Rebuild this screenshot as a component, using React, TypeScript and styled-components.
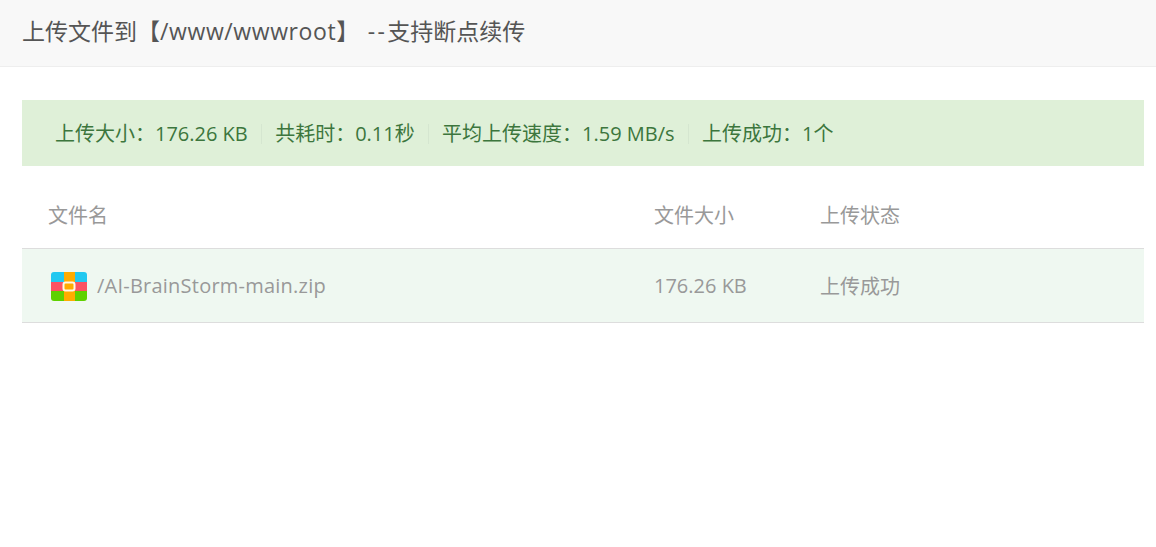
import React from 'react'
import styled, { createGlobalStyle } from 'styled-components'

const GlobalStyle = createGlobalStyle`
	html, body {
		margin: 0;
		padding: 0;
		background: #fff;
		font-family: "Open Sans", "Noto Sans CJK SC", sans-serif;
	}
`

const Page = styled.div`
	width: 1156px;
	height: 547px;
	overflow: hidden;
	background: #fff;
`

const Header = styled.div`
	height: 67px;
	padding: 0 22px 7px;
	box-sizing: border-box;
	display: flex;
	align-items: center;
	white-space: pre;
	font-size: 23px;
	color: #555;
	background: #f8f8f8;
	border-bottom: 1px solid #eee;
`

const Latin = styled.span<{ $spacing: string }>`
	letter-spacing: ${(props) => props.$spacing};
`

const Content = styled.div`
	padding: 33px 12px 0 22px;
`

const Alert = styled.div`
	height: 66px;
	padding: 2px 19.8px 0;
	box-sizing: border-box;
	display: flex;
	align-items: center;
	font-size: 20px;
	color: #3c763d;
	background: #dff0d8;
`

const Stat = styled.span<{ $first?: boolean }>`
	padding: 0 13.2px;
	white-space: nowrap;
	border-left: ${(props) => (props.$first ? 'none' : '1px solid #d5e6d0')};
	line-height: 20px;
`

const Row = styled.div<{ $head?: boolean }>`
	display: grid;
	grid-template-columns: 632px 166px 1fr;
	align-items: center;
	height: ${(props) => (props.$head ? '68px' : '73px')};
	padding-top: ${(props) => (props.$head ? '14px' : '0')};
	font-size: 20px;
	color: #999;
	background: ${(props) => (props.$head ? '#fff' : '#eff8f1')};
	border-bottom: 1px solid #ddd;
`

const Cell = styled.div<{ $first?: boolean }>`
	display: flex;
	align-items: center;
	gap: 9px;
	white-space: nowrap;
	padding-left: ${(props) => (props.$first ? '26px' : '0')};
`

const ZipIcon = () => (
	<svg width="38" height="30" viewBox="0 0 38 30" style={{ marginLeft: 2, marginTop: 1 }}>
		<defs>
			<clipPath id="zipBox">
				<rect x="1" y="1" width="36" height="29" rx="3" />
			</clipPath>
		</defs>
		<g clipPath="url(#zipBox)">
			<rect x="1" y="1" width="36" height="10" fill="#22c8f0" />
			<rect x="1" y="11" width="36" height="9" fill="#fb5263" />
			<rect x="1" y="20" width="36" height="10" fill="#5fd100" />
			<rect x="14" y="1" width="11" height="29" fill="#ffab00" />
		</g>
		<rect x="13.5" y="11.5" width="11" height="8" rx="2" fill="#ffab00" stroke="#fff8e8" strokeWidth="2" />
	</svg>
)

const App: React.FC = () => {
	return (
		<Page>
			<GlobalStyle />
			<Header>
				<span>
					上传文件到【<Latin $spacing="0.6px">/www/wwwroot</Latin>】<Latin $spacing="2.4px"> --</Latin>支持断点续传
				</span>
			</Header>
			<Content>
				<Alert>
					<Stat $first>上传大小：176.26 KB</Stat>
					<Stat>共耗时：0.11秒</Stat>
					<Stat>平均上传速度：1.59 MB/s</Stat>
					<Stat>上传成功：1个</Stat>
				</Alert>
				<Row $head>
					<Cell $first>文件名</Cell>
					<Cell>文件大小</Cell>
					<Cell>上传状态</Cell>
				</Row>
				<Row>
					<Cell $first>
						<ZipIcon />
						<Latin $spacing="0.23px">/AI-BrainStorm-main.zip</Latin>
					</Cell>
					<Cell>176.26 KB</Cell>
					<Cell>上传成功</Cell>
				</Row>
			</Content>
		</Page>
	)
}

export default App
